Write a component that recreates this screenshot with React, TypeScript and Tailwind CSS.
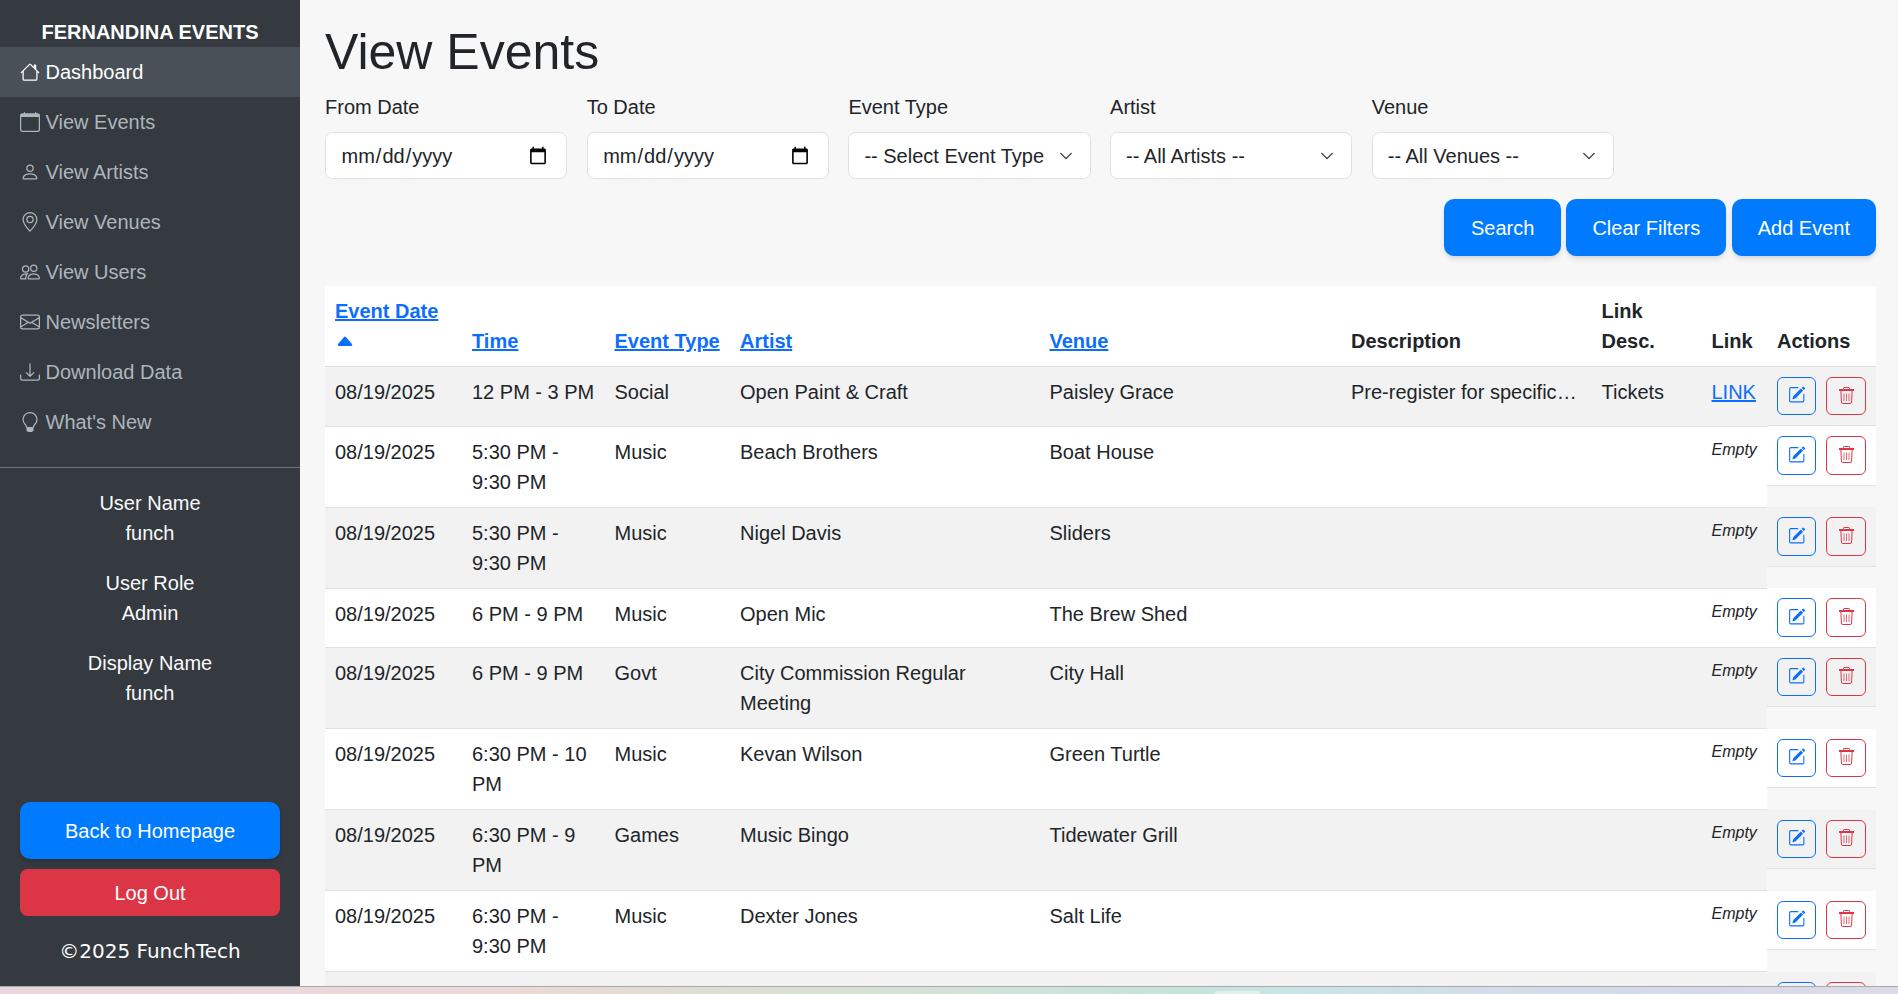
import React from "react";
import {
  BsHouse,
  BsCalendar,
  BsPerson,
  BsGeoAlt,
  BsPeople,
  BsEnvelope,
  BsDownload,
  BsLightbulb,
  BsPencilSquare,
  BsCaretUpFill,
} from "react-icons/bs";

const nav = [
  { label: "Dashboard", Icon: BsHouse, active: true },
  { label: "View Events", Icon: BsCalendar },
  { label: "View Artists", Icon: BsPerson },
  { label: "View Venues", Icon: BsGeoAlt },
  { label: "View Users", Icon: BsPeople },
  { label: "Newsletters", Icon: BsEnvelope },
  { label: "Download Data", Icon: BsDownload },
  { label: "What's New", Icon: BsLightbulb },
];

const rows = [
  ["08/19/2025", "12 PM - 3 PM", "Social", "Open Paint & Craft", "Paisley Grace", "Pre-register for specific locations", "Tickets", "LINK"],
  ["08/19/2025", "5:30 PM - 9:30 PM", "Music", "Beach Brothers", "Boat House", "", "", ""],
  ["08/19/2025", "5:30 PM - 9:30 PM", "Music", "Nigel Davis", "Sliders", "", "", ""],
  ["08/19/2025", "6 PM - 9 PM", "Music", "Open Mic", "The Brew Shed", "", "", ""],
  ["08/19/2025", "6 PM - 9 PM", "Govt", "City Commission Regular Meeting", "City Hall", "", "", ""],
  ["08/19/2025", "6:30 PM - 10 PM", "Music", "Kevan Wilson", "Green Turtle", "", "", ""],
  ["08/19/2025", "6:30 PM - 9 PM", "Games", "Music Bingo", "Tidewater Grill", "", "", ""],
  ["08/19/2025", "6:30 PM - 9:30 PM", "Music", "Dexter Jones", "Salt Life", "", "", ""],
  ["", "", "", "", "", "", "", ""],
];

function Field({ label, children }: { label: string; children: React.ReactNode }) {
  return (
    <div className="w-[242.2px]">
      <label className="block mb-[10px]">{label}</label>
      {children}
    </div>
  );
}

function Select({ text }: { text: string }) {
  return (
    <div className="relative">
      <select className="block w-full h-[47px] appearance-none bg-white border border-[#dee2e6] rounded-[7.5px] pl-[15px] pr-[45px] text-[#212529] outline-none">
        <option>{text}</option>
      </select>
      <svg viewBox="0 0 16 16" className="absolute right-[18px] top-[17px] w-3.5 h-3.5 pointer-events-none" fill="none" stroke="#343a40" strokeWidth="1.6" strokeLinecap="round" strokeLinejoin="round">
        <path d="m2 5 6 6 6-6" />
      </svg>
    </div>
  );
}

function TrashIcon() {
  return (
    <svg viewBox="0 0 15 17" className="w-[15px] h-[17px]" fill="none" stroke="currentColor">
      <path d="M4.5 2V1.2a.7.7 0 0 1 .7-.7h4.6a.7.7 0 0 1 .7.7V2" strokeWidth="1" />
      <path d="M.5 3h14" strokeWidth="2" strokeLinecap="round" />
      <path d="M1.9 4 2.4 15a1.5 1.5 0 0 0 1.5 1.5h7.2a1.5 1.5 0 0 0 1.5-1.5L13.1 4" strokeWidth="1" />
      <path d="M5 6.5v7.5M7.5 6.5v7.5M10 6.5v7.5" strokeWidth="1" opacity="0.75" />
    </svg>
  );
}

function Actions() {
  return (
    <div className="flex gap-[10px] p-[10px] border-b border-[#dee2e6]">
      <button className="flex items-center justify-center w-[39px] h-[38.25px] pb-[2px] border border-[#0d6efd] rounded-[6px] text-[#0d6efd]">
        <BsPencilSquare className="w-[17.5px] h-[17.5px]" />
      </button>
      <button className="flex items-center justify-center w-[40px] h-[38.25px] pb-[2px] border border-[#dc3545] rounded-[6px] text-[#dc3545]">
        <TrashIcon />
      </button>
    </div>
  );
}

export default function App() {
  return (
    <div className="h-[994px] overflow-hidden flex flex-col text-[20px] leading-[30px] text-[#212529] font-['Liberation_Sans',Arial,sans-serif]">
      <div className="h-[986px] flex overflow-hidden bg-[#f7f7f7]">
        <aside className="w-[300px] shrink-0 bg-[#343a40] flex flex-col">
          <div className="pt-[17px] h-[47px] text-center font-bold text-white leading-[30px]">FERNANDINA EVENTS</div>
          <nav className="pb-[20px] border-b border-[#6c757d]">
            {nav.map(({ label, Icon, active }) => (
              <div key={label} className={`h-[50px] flex items-center gap-[5.5px] pl-[20px] ${active ? "bg-[#495057] text-white" : "text-[#adb5bd]"}`}>
                <Icon className="w-[20px] h-[20px]" />
                <span>{label}</span>
              </div>
            ))}
          </nav>
          <div className="pt-[20px] text-center text-[#f8f9fa] flex flex-col gap-[20px]">
            <p>User Name<br />funch</p>
            <p>User Role<br />Admin</p>
            <p>Display Name<br />funch</p>
          </div>
          <div className="mt-auto px-[20px] pb-[20px] flex flex-col">
            <button className="h-[57px] rounded-[10px] bg-[#007bff] text-white shadow-md">Back to Homepage</button>
            <button className="h-[47px] mt-[10px] rounded-[7.5px] bg-[#dc3545] text-white">Log Out</button>
            <p className="mt-[20px] text-center text-white font-['DejaVu_Sans',sans-serif] text-[20px]">©2025 FunchTech</p>
          </div>
        </aside>
        <main className="flex-1 pl-[25px] pt-[22px] pr-[22px] min-w-0">
          <h1 className="text-[50px] leading-[60px] font-normal mb-[10px]">View Events</h1>
          <div className="flex gap-[19.5px]">
            <Field label="From Date">
              <input type="date" className="block w-full h-[47px] bg-white border border-[#dee2e6] rounded-[7.5px] pl-[14.5px] pr-[16px] outline-none" />
            </Field>
            <Field label="To Date">
              <input type="date" className="block w-full h-[47px] bg-white border border-[#dee2e6] rounded-[7.5px] pl-[14.5px] pr-[16px] outline-none" />
            </Field>
            <Field label="Event Type"><Select text="-- Select Event Type" /></Field>
            <Field label="Artist"><Select text="-- All Artists --" /></Field>
            <Field label="Venue"><Select text="-- All Venues --" /></Field>
          </div>
          <div className="flex justify-end gap-[5.5px] mt-[20px]">
            <button className="h-[57px] w-[116.5px] rounded-[10px] bg-[#007bff] text-white shadow-md">Search</button>
            <button className="h-[57px] px-[26px] rounded-[10px] bg-[#007bff] text-white shadow-md">Clear Filters</button>
            <button className="h-[57px] px-[26px] rounded-[10px] bg-[#007bff] text-white shadow-md">Add Event</button>
          </div>
          <table className="table-fixed w-[1551px] mt-[30px] border-collapse">
            <colgroup>
              <col className="w-[137px]" />
              <col className="w-[142.5px]" />
              <col className="w-[125.5px]" />
              <col className="w-[309.5px]" />
              <col className="w-[301.5px]" />
              <col className="w-[250.5px]" />
              <col className="w-[110px]" />
              <col className="w-[65.5px]" />
              <col className="w-[109px]" />
            </colgroup>
            <thead>
              <tr className="bg-white align-bottom text-left">
                <th className="p-[10px] border-b border-[#dee2e6]">
                  <a className="text-[#0d6efd] underline block">Event Date</a>
                  <div className="h-[30px] flex items-center"><BsCaretUpFill className="w-[20px] h-[20px] text-[#0d6efd]" /></div>
                </th>
                <th className="p-[10px] border-b border-[#dee2e6]"><a className="text-[#0d6efd] underline">Time</a></th>
                <th className="p-[10px] border-b border-[#dee2e6]"><a className="text-[#0d6efd] underline">Event Type</a></th>
                <th className="p-[10px] border-b border-[#dee2e6]"><a className="text-[#0d6efd] underline">Artist</a></th>
                <th className="p-[10px] border-b border-[#dee2e6]"><a className="text-[#0d6efd] underline">Venue</a></th>
                <th className="p-[10px] border-b border-[#dee2e6]">Description</th>
                <th className="p-[10px] border-b border-[#dee2e6]">Link Desc.</th>
                <th className="p-[10px] border-b border-[#dee2e6]">Link</th>
                <th className="p-[10px] border-b border-[#dee2e6]">Actions</th>
              </tr>
            </thead>
            <tbody>
              {rows.map((r, i) => {
                const bg = i % 2 === 0 ? "bg-[#f2f2f2]" : "bg-white";
                return (
                  <tr key={i} className="align-top">
                    {r.slice(0, 5).map((c, j) => (
                      <td key={j} className={`p-[10px] border-b border-[#dee2e6] ${bg}`}>{c || "\u00a0"}</td>
                    ))}
                    <td className={`p-[10px] border-b border-[#dee2e6] truncate ${bg}`}>{r[5]}</td>
                    <td className={`p-[10px] border-b border-[#dee2e6] ${bg}`}>{r[6]}</td>
                    <td className={`p-[10px] border-b border-[#dee2e6] ${bg}`}>
                      {r[7] ? <a className="text-[#0d6efd] underline">{r[7]}</a> : <em className="block text-[16px] leading-[26px]">Empty</em>}
                    </td>
                    <td className="p-0"><div className={bg}><Actions /></div></td>
                  </tr>
                );
              })}
            </tbody>
          </table>
        </main>
      </div>
      <div className="relative h-[8px] border-t border-[#a9a9a9] bg-[linear-gradient(90deg,#e8d6dc_0%,#ecd9d8_26%,#e4dcd0_32%,#d8e0d0_42%,#d0e2d8_53%,#c6e4dc_63%,#c8e4e4_68%,#d0dee8_76%,#d6dae8_90%,#dcdae8_100%)]">
        <div className="absolute left-[1215px] bottom-0 w-[45px] h-[3px] rounded-t-[2px] bg-[#e4f0ec]" />
      </div>
    </div>
  );
}
